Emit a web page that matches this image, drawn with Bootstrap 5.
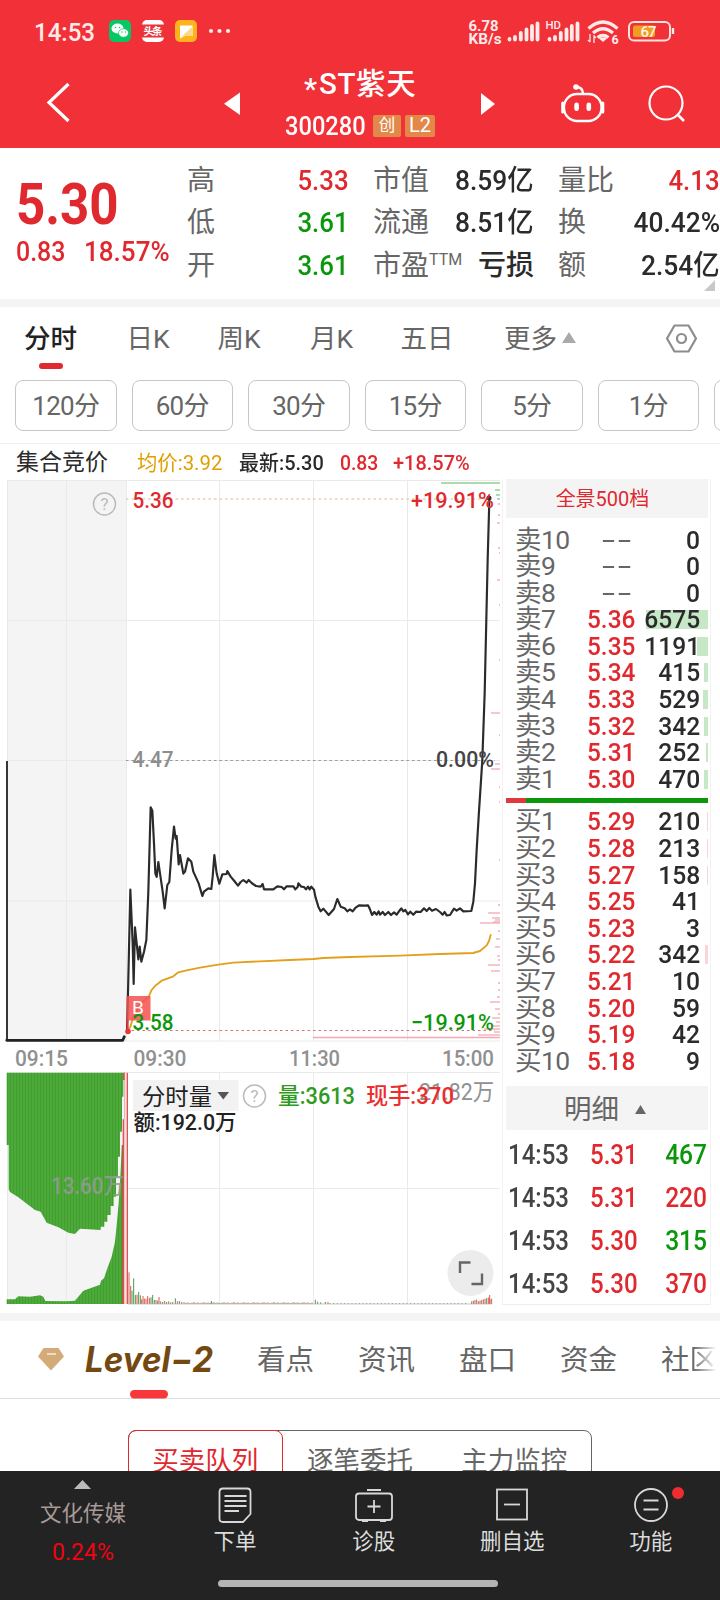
<!DOCTYPE html>
<html lang="zh-CN">
<head>
<meta charset="utf-8">
<meta name="viewport" content="width=device-width, initial-scale=1">
<title>*ST紫天 300280</title>
<link rel="stylesheet" href="https://cdn.jsdelivr.net/npm/bootstrap@5.3.0/dist/css/bootstrap.min.css">
<style>
:root{--up:#e0292f;--dn:#0b970b;--ink:#2b2b2b;--dim:#666}
body{font-family:Roboto,"Noto Sans CJK SC",sans-serif;color:var(--ink);background:#fff;width:720px;height:1600px;overflow:hidden}
svg{display:block;flex:none}
svg text{font-family:Roboto,"Noto Sans CJK SC",sans-serif}
.up{color:var(--up)}.dn{color:var(--dn)}.dim{color:var(--dim)}
.top-area{background:#f13037;height:148px;color:#fff}
.status-row{height:62px;padding-left:33px}
.title-row{height:86px}
.title-box{width:150px;padding-top:5px}
.stock-name{font-size:29.5px;line-height:34px;font-weight:500;padding-left:19px;letter-spacing:.6px}
.name-star{width:15px;height:24px;padding-top:5px}
.stock-code{font-size:26px;line-height:30px;font-weight:500;width:80px}
.tag-box{background:#e2894a;border-radius:2px;height:22px;line-height:21px;font-size:20px;text-align:center}
/* narrow numerals */
.nr,.nl{display:inline-block;font-weight:500;transform:scaleX(.89);white-space:nowrap}
.nr{transform-origin:right}.nl{transform-origin:left}
.nw{transform:scaleX(.94)}
.quote{height:151px;padding:12px 0 0 16px}
.last-price{font-size:58px;line-height:60px;font-weight:700;transform:scaleX(.88)}
.chg{font-size:28px;line-height:30px;margin-top:3px}
.q-col{font-size:28px;line-height:42.3px}
.q-row{height:42.3px}
.band{background:#f4f4f4;height:8px}
.k-tabs{height:73px;font-size:26.5px;line-height:63px}
.pill-row{height:51px;padding-left:15px;gap:15px;overflow:hidden}
.pill{width:101.5px;height:51px;border:1px solid #c6c6c6;border-radius:8px;font-size:26px;line-height:51px;letter-spacing:-.7px;flex:none;text-align:center;color:var(--dim)}
.info-row{height:36px;margin-top:12px;border-top:1px solid #f0f0f0;font-size:21px;line-height:38px;white-space:nowrap}
.side{width:209px;margin-left:2px;border-left:1px solid #f2f2f2;border-right:1px solid #f2f2f2;border-bottom:1px solid #eee;height:826px}
.side-in{margin:0 2px 0 3px}
.side-head{background:#f4f4f4;text-align:center}
.book-row{height:26.6px;line-height:26.6px;font-size:26.5px;position:relative;padding:0 8px 0 9px}
.book-row .lab{width:72px;flex:none;letter-spacing:-.6px;color:var(--dim);white-space:nowrap}
.book-row .prc{width:53px;flex:none}
.book-row .prc .nl{transform:scaleX(.92)}
.book-row .dash{padding-left:17px}
.depth{position:absolute;right:0;top:4px;height:19px}
.tick-row{height:43px;line-height:43.5px;font-size:27px;padding:0 1px 0 2px}
.l2-tabs{height:78px;border-bottom:1px solid #dcdcdc;font-size:28.5px;color:var(--dim);line-height:80px;position:relative}
.fade-end{background:linear-gradient(90deg,#666 10%,#fff 95%);-webkit-background-clip:text;background-clip:text;color:transparent}
.seg-wrap{height:72px;overflow:hidden;padding-top:31px}
.seg-box{width:464px;height:64px;margin-left:128px;border:1px solid #666;border-radius:8px;font-size:26.5px;line-height:60px;color:var(--dim);position:relative}
.seg-on{width:155px;height:64px;margin:-1px 0 0 -1px;border:1px solid var(--up);border-radius:8px;color:var(--up)}
.foot{height:129px;background:#232323;color:#dcdcdc;font-size:21.5px;position:relative}
.foot-item{width:138.7px;line-height:33px}
.home-bar{position:absolute;left:218px;top:109px;width:280px;height:7px;border-radius:4px;background:#b4b4b4}
</style>
</head>
<body>
<header class="top-area">
  <div class="status-row d-flex align-items-center">
    <svg width="687" height="62" viewBox="33 0 687 62">
      <text x="34" y="41" font-size="26.5" fill="#ffeaea" font-weight="500" textLength="61" lengthAdjust="spacingAndGlyphs">14:53</text>
      <rect x="109" y="20" width="22" height="22" rx="5" fill="#07c664"/>
      <ellipse cx="117.500" cy="28.500" rx="6" ry="5" fill="#fff"/><ellipse cx="123.500" cy="33" rx="5" ry="4.200" fill="#fff" stroke="#07c664" stroke-width=".7"/>
      <g fill="#07c664"><circle cx="115.500" cy="27.500" r=".8"/><circle cx="119.500" cy="27.500" r=".8"/><circle cx="122" cy="32" r=".7"/><circle cx="125.500" cy="32" r=".7"/></g>
      <rect x="142" y="20" width="22" height="22" rx="5" fill="#fff"/><rect x="141.500" y="24.500" width="23" height="13" fill="#e93438"/>
      <text x="143.500" y="35" font-size="10.500" font-weight="700" fill="#fff" textLength="19">头条</text>
      <rect x="175" y="20" width="22" height="22" rx="5" fill="#fdb41c"/>
      <path d="M180 25.500H192.500V36H185L180 38.500Z" fill="#fff"/><path d="M181 37L192 27V36H185Z" fill="#fbd98b"/>
      <g fill="#ffeaea"><circle cx="211" cy="31" r="2.100"/><circle cx="219.500" cy="31" r="2.100"/><circle cx="228" cy="31" r="2.100"/></g>
      <g fill="#ffeaea" font-weight="700" font-size="14.500">
        <text x="468.500" y="31" textLength="30" lengthAdjust="spacingAndGlyphs">6.78</text><text x="468.500" y="44" textLength="33" lengthAdjust="spacingAndGlyphs">KB/s</text>
        <text x="545.500" y="29" font-size="10.500" font-weight="500" textLength="15.500" lengthAdjust="spacingAndGlyphs">HD</text>
      </g>
      <g stroke="#ffeaea" stroke-width="3.800" stroke-linecap="round">
        <path d="M509.500 39.500V39M515 39.500V37M520.800 39.500V33M526.500 39.500V29.500M532 39.500V26M537.500 39.500V23.500"/>
        <path d="M549.500 39.500V39M555 39.500V37M560.800 39.500V33M566.500 39.500V29.500M571.800 39.500V26M577.500 39.500V23.500"/>
      </g>
      <g fill="none" stroke="#ffeaea" stroke-width="3.200"><path d="M588.500 28.500Q603 15.500 617.500 28.500M593 33Q603 24.500 613 33M597.500 37.500Q603 33.500 608.500 37.500"/></g>
      <path d="M599 38.500Q603 36.500 607 38.500L603 42Z" fill="#ffeaea"/>
      <path d="M590 42V34M590 42L588 40M594 35V43M594 36L596 38" stroke="#ffeaea" stroke-width="1.300" fill="none"/>
      <text x="611.500" y="43.500" font-size="12.500" font-weight="700" fill="#ffeaea">6</text>
      <rect x="629" y="22" width="41" height="18.500" rx="5" fill="none" stroke="#ffe3dc" stroke-width="2"/>
      <rect x="633" y="25.500" width="22" height="11.500" rx="2" fill="#f29d1f"/>
      <path d="M673 28V34" stroke="#ffeaea" stroke-width="2.400"/>
      <text x="640.500" y="36.500" font-size="15" font-weight="500" fill="#fff4e4" textLength="16">67</text>
    </svg>
  </div>
  <div class="title-row d-flex">
    <svg width="285" height="86" viewBox="0 62 285 86">
      <path d="M68.500 84L49 102.500L68.500 121" fill="none" stroke="#fff" stroke-width="3.200"/>
      <path d="M240 92.500V115L224 103.700Z" fill="#fff"/>
    </svg>
    <div class="title-box text-nowrap">
      <div class="stock-name d-flex"><span class="name-star">*</span>ST紫天</div>
      <div class="d-flex align-items-center" style="margin-top:10px"><div class="stock-code"><span class="nl" style="transform:scaleX(.91)">300280</span></div><div class="tag-box ms-2" style="width:28px;font-size:16.500px">创</div><div class="tag-box ms-1" style="width:30px">L2</div></div>
    </div>
    <svg width="285" height="86" viewBox="435 62 285 86">
      <path d="M481 93V115L495 104Z" fill="#fff"/>
      <g fill="none" stroke="#fff" stroke-width="2.400"><rect x="564" y="94" width="37.500" height="27" rx="13"/><path d="M562.700 103V112M602.800 103V112" stroke-width="3" stroke-linecap="round"/><path d="M583 94Q583 87 576 87"/></g>
      <circle cx="576" cy="87" r="2.800" fill="#fff"/><rect x="574.300" y="102.500" width="4.600" height="8.500" rx="2.300" fill="#fff"/><rect x="586.500" y="102.500" width="4.600" height="8.500" rx="2.300" fill="#fff"/>
      <circle cx="666" cy="103" r="16.500" fill="none" stroke="#fff" stroke-width="2.200"/><path d="M678 115L684 121" stroke="#fff" stroke-width="2.600"/>
    </svg>
  </div>
</header>

<section class="quote d-flex position-relative">
  <div style="width:171px;padding-top:14px" class="up">
    <div class="nl last-price">5.30</div>
    <div class="chg d-flex"><span class="nl" style="width:68px">0.83</span><span class="nl" style="transform:scaleX(.93)">18.57%</span></div>
  </div>
  <div class="q-col" style="width:162px">
    <div class="q-row d-flex justify-content-between"><span class="dim">高</span><span class="nr up" style="transform:scaleX(.92)">5.33</span></div>
    <div class="q-row d-flex justify-content-between"><span class="dim">低</span><span class="nr dn" style="transform:scaleX(.92)">3.61</span></div>
    <div class="q-row d-flex justify-content-between"><span class="dim">开</span><span class="nr dn" style="transform:scaleX(.92)">3.61</span></div>
  </div>
  <div class="q-col" style="width:161px;margin-left:24px">
    <div class="q-row d-flex justify-content-between"><span class="dim">市值</span><span class="nr nw">8.59亿</span></div>
    <div class="q-row d-flex justify-content-between"><span class="dim">流通</span><span class="nr nw">8.51亿</span></div>
    <div class="q-row d-flex justify-content-between"><span class="dim text-nowrap">市盈<span class="align-top" style="font-size:16px;line-height:30px">TTM</span></span><span class="fw-medium">亏损</span></div>
  </div>
  <div class="q-col" style="width:162px;margin-left:24px">
    <div class="q-row d-flex justify-content-between"><span class="dim">量比</span><span class="nr up" style="transform:scaleX(.92)">4.13</span></div>
    <div class="q-row d-flex justify-content-between"><span class="dim">换</span><span class="nr nw">40.42%</span></div>
    <div class="q-row d-flex justify-content-between"><span class="dim">额</span><span class="nr nw">2.54亿</span></div>
  </div>
  <svg class="position-absolute" style="right:5px;bottom:8px" width="11" height="11"><path d="M11 0V11H0Z" fill="#c8c8c8"/></svg>
</section>
<div class="band"></div>

<nav class="k-tabs d-flex dim text-nowrap">
  <div class="text-center position-relative fw-medium" style="width:101px;color:#222">分时<span class="position-absolute rounded-pill" style="left:38.500px;top:56px;width:24px;height:6px;background:#e0292f"></span></div>
  <div class="text-center" style="width:94px">日K</div>
  <div class="text-center" style="width:88px">周K</div>
  <div class="text-center" style="width:97px">月K</div>
  <div class="text-center" style="width:94px">五日</div>
  <div style="padding-left:30px;width:87px">更多</div>
  <svg width="159" height="62"><path d="M8 25L15 36H1Z" fill="#aaa"/><g fill="none" stroke="#8c8c8c" stroke-width="2.200"><path d="M113.500 18.500H127.500L135 31.500L127.500 44.500H113.500L106 31.500Z" stroke-linejoin="round"/><circle cx="120.500" cy="31.500" r="4.500"/></g></svg>
</nav>
<div class="pill-row d-flex">
  <div class="pill">120分</div><div class="pill">60分</div><div class="pill">30分</div><div class="pill">15分</div><div class="pill">5分</div><div class="pill">1分</div><div class="pill"></div>
</div>
<div class="info-row d-flex">
  <span style="width:137px;padding-left:16px;font-size:23px">集合竞价</span>
  <span style="width:102px;color:#dfa000"><span class="nl" style="transform:scaleX(.97);font-weight:400">均价:3.92</span></span>
  <span style="width:101px"><span class="nl" style="transform:scaleX(.95)">最新:5.30</span></span>
  <span class="up" style="width:53px"><span class="nl" style="transform:scaleX(.92)">0.83</span></span>
  <span class="up"><span class="nl" style="transform:scaleX(.95)">+18.57%</span></span>
</div>

<main class="d-flex" style="height:834px">
  <svg id="chart" width="500" height="826" viewBox="0 479 500 826">
    <defs><pattern id="stripe" width="9" height="10" patternUnits="userSpaceOnUse" x="20"><rect width="9" height="10" fill="#57b043"/><rect width="4.500" height="10" fill="#3b9c2b"/></pattern></defs>
    <rect x="7" y="480" width="119" height="561" fill="#f4f4f4"/>
    <rect x="7" y="1072" width="119" height="232" fill="#f4f4f4"/>
    <path d="M7.500 480V1041M66.500 480V1041M126.500 480V1041M219.500 480V1041M313.500 480V1041M407.500 480V1041M7 480.500H502M7 620.500H502M7 760.500H502M7 901H502M7 1041H502M7.500 1072V1304M66.500 1072V1304M219.500 1072V1304M313.500 1072V1304M407.500 1072V1304M7 1072.500H502M126 1188.500H502" stroke="#eaeaea" fill="none"/>
    <g stroke-dasharray="2.500 3"><path d="M126 499H495" stroke="#dcb896"/><path d="M126 760.500H495" stroke="#999"/><path d="M126 1030.500H495" stroke="#e07070"/></g>
    <g id="profile" stroke-width="1.300"></g>
    <path d="M7 761V1041" stroke="#222" stroke-width="1.800"/>
    <g transform="translate(0 760) scale(.33333)" fill="none" stroke-linejoin="round" stroke-linecap="round">
      <path d="M20 841H368L373 830" stroke="#222" stroke-width="8"/>
      <path d="M383 815L391 800L397 780L405 762L420 735L432 722L446 710L455 690L466 677L485 662L520 649L535 637L560 631L600 623L655 614L700 608L780 604L870 600L940 597L970 594L1050 591L1200 587L1320 582L1420 579L1440 573L1460 556L1467 543L1472 525" stroke="#e3a01c" stroke-width="5.500"/>
      <path d="M381 815L384 700L391 389L398 550L401 672L405 502L410 550L415 598L419 560L424 605L432 575L439 540L445 395L449 250L452 142L457 152L462 250L466 340L470 351L475 306L480 340L488 395L494 445L502 375L508 366L515 270L522 200L527 236L530 228L536 313L540 285L550 341L555 335L564 295L574 305L580 335L596 370L607 408L612 395L625 385L634 387L638 350L643 285L650 340L658 371L667 343L680 342L682 333L692 350L703 363L714 377L722 366L730 360L740 368L746 360L755 369L768 378L782 380L788 372L792 388L820 388L832 379L845 381L852 388L860 379L880 379L886 388L893 381L895 370L904 380L912 381L918 388L924 380L929 388L934 380L942 389L946 410L955 440L962 454L970 446L986 465L1002 447L1012 417L1022 440L1034 445L1042 454L1050 448L1058 454L1066 444L1077 436L1095 437L1104 436L1110 448L1116 465L1123 456L1130 464L1136 454L1140 464L1148 456L1155 465L1165 456L1173 465L1182 457L1190 464L1200 450L1204 445L1210 454L1216 450L1224 463L1231 455L1240 464L1248 455L1262 456L1272 445L1280 453L1288 444L1296 452L1308 447L1320 456L1328 464L1334 456L1340 466L1350 465L1362 446L1370 452L1380 445L1390 454L1414 453L1420 425L1425 370L1430 270L1436 170L1447 0L1454 -200L1463 -600L1468 -780" stroke="#2b2b2b" stroke-width="6.500"/>
    </g>
    <rect x="126.500" y="996" width="24" height="24.500" fill="#f4514f" fill-opacity=".85"/><circle cx="128" cy="1031.500" r="2.800" fill="#e8353a"/><path d="M127.500 1020V1031" stroke="#e8353a" stroke-width="2"/>
    <text x="132" y="1014" font-size="19" fill="#fff">B</text>
    <circle cx="489" cy="498" r="2.500" fill="#333"/>
    <g font-size="22.500" font-weight="500">
      <text x="132.500" y="508" fill="#e0292f" textLength="41" lengthAdjust="spacingAndGlyphs">5.36</text>
      <text x="411" y="508" fill="#e0292f" textLength="83" lengthAdjust="spacingAndGlyphs">+19.91%</text>
      <text x="132.500" y="766.500" fill="#8d8d8d" textLength="41" lengthAdjust="spacingAndGlyphs">4.47</text>
      <text x="436" y="766.500" fill="#444" textLength="58" lengthAdjust="spacingAndGlyphs">0.00%</text>
      <text x="132.500" y="1029.500" fill="#0b970b" textLength="41" lengthAdjust="spacingAndGlyphs">3.58</text>
      <text x="411" y="1029.500" fill="#0b970b" textLength="83" lengthAdjust="spacingAndGlyphs">−19.91%</text>
      <g fill="#909090">
      <text x="15" y="1066" textLength="53" lengthAdjust="spacingAndGlyphs">09:15</text><text x="133.500" y="1066" textLength="53" lengthAdjust="spacingAndGlyphs">09:30</text><text x="289" y="1066" textLength="51" lengthAdjust="spacingAndGlyphs">11:30</text><text x="442" y="1066" textLength="52" lengthAdjust="spacingAndGlyphs">15:00</text></g>
    </g>
    <g fill="none" stroke="#bbb" stroke-width="1.500"><circle cx="104.500" cy="504" r="11"/><circle cx="254.500" cy="1096" r="11"/></g>
    <g fill="#bbb" font-size="17" text-anchor="middle"><text x="104.500" y="510">?</text><text x="254.500" y="1102">?</text></g>
    <g transform="translate(0 1060) scale(.33333)">
      <path d="M20 38H374V60H370V110H366V215H360V290H354V350H348V410H341V438H332V465H322V485H313V500H302V510L240 506L225 522L205 518L175 502L140 488L122 455L105 450L55 412L30 396L26 388V255H20Z" fill="url(#stripe)"/>
      <path d="M20 732V718H45L55 709L90 710L120 706L130 710L136 723L200 724L225 722L250 692L300 674L303 662L312 655L322 625L335 590L345 545L350 495L356 430L362 330L366 250V732Z" fill="url(#stripe)"/>
      <path d="M371 732V178M375 178V38" stroke="#dc5555" stroke-width="6" fill="none"/><path d="M367.500 732V255" stroke="#a86040" stroke-width="4"/>
      <rect x="373" y="38" width="9" height="694" fill="#fbe0e0"/><path d="M382 38V732M372 38V60" stroke="#d84444" stroke-width="3.500"/>
      <g id="vol"></g>
      <path d="M384 732H1475" stroke="#aaa" stroke-width="2"/>
    </g>
    <rect x="133" y="1080" width="105.500" height="31" fill="#f2f2f2"/>
    <path d="M217.500 1092H229L223.300 1099.500Z" fill="#555"/>
    <g font-size="23">
      <text x="142" y="1104.500" fill="#222" textLength="70" lengthAdjust="spacingAndGlyphs">分时量</text>
      <text x="133.500" y="1129.500" fill="#222" font-weight="500" font-size="22" textLength="103" lengthAdjust="spacingAndGlyphs">额:192.0万</text>
      <text x="51" y="1194" fill="#999" fill-opacity=".85" font-weight="500" textLength="73" lengthAdjust="spacingAndGlyphs">13.60万</text>
      <text x="419" y="1100" fill="#909090" textLength="75" lengthAdjust="spacingAndGlyphs">21.82万</text>
      <text x="278" y="1104" fill="#2f9a22" font-weight="500" textLength="77" lengthAdjust="spacingAndGlyphs">量:3613</text>
      <text x="366" y="1104" fill="#ec2d2d" font-weight="500" textLength="88" lengthAdjust="spacingAndGlyphs">现手:370</text>
    </g>
    <circle cx="470.500" cy="1273" r="23" fill="#ececec"/><path d="M460 1273V1262.500H470.500M482 1273.500V1284H471.500" fill="none" stroke="#666" stroke-width="2.400"/>
  </svg>

  <aside class="side"><div class="side-in">
    <div class="side-head up" style="height:39px;line-height:41px;font-size:20px;padding-right:9px">全景500档</div>
    <div id="sells" style="padding-top:8.500px"></div>
    <div class="d-flex" style="height:5px;margin-top:5.500px;background:#0b970b"><div style="width:20px;background:#e0393d"></div></div>
    <div id="buys" style="padding-top:5.500px"></div>
    <div class="side-head dim d-flex justify-content-center align-items-center" style="height:44px;margin-top:12px;font-size:27.500px;gap:16px;padding:2px 4px 0 0">明细<svg width="11" height="9"><path d="M5.500 0L11 9H0Z" fill="#666"/></svg></div>
    <div id="ticks" style="padding-top:4px"></div>
  </div></aside>
</main>
<div class="band"></div>

<nav class="l2-tabs text-nowrap d-flex">
  <svg width="257" height="78" viewBox="0 1321 257 78">
    <path d="M43.500 1348H58.500L64 1356.500L51 1370.500L38 1356.500Z" fill="#d3ab78"/><path d="M47 1354H56" stroke="#f6e8d2" stroke-width="1.600"/>
    <text x="85" y="1372" font-size="35" font-weight="700" font-style="italic" fill="#744811" textLength="128" lengthAdjust="spacingAndGlyphs" style="font-family:Inter,sans-serif">Level−2</text>
    <rect x="130" y="1390" width="38" height="8.500" rx="4.200" fill="#f7373a"/>
  </svg>
  <span style="width:101px">看点</span><span style="width:101px">资讯</span><span style="width:101px">盘口</span><span style="width:101px">资金</span><span>社<span class="fade-end">区</span></span>
</nav>
<div class="seg-wrap"><div class="seg-box d-flex text-center"><div class="seg-on">买卖队列</div><div style="width:155px">逐笔委托</div><div style="width:154px">主力监控</div></div></div>

<footer class="foot d-flex text-center">
  <div style="width:166px;line-height:30px;color:#a89a98"><svg class="mx-auto" width="17" height="9" style="margin-top:9px"><path d="M8.500 0L17 9H0Z" fill="#bbb"/></svg><div style="margin-top:10px">文化传媒</div><div style="font-size:23px;margin-top:9px;color:#f00410">0.24%</div></div>
  <div class="foot-item"><svg class="mx-auto" width="40" height="54" viewBox="0 0 40 54" fill="none" stroke="#d8d8d8" stroke-width="1.800"><path d="M8 17.500H32Q35.500 17.500 35.500 21V43L28 51H8Q4.500 51 4.500 47.500V21Q4.500 17.500 8 17.500ZM9.500 25H31.500M9.500 30H31.500M9.500 35H31.500M9.500 40H24"/></svg><div>下单</div></div>
  <div class="foot-item"><svg class="mx-auto" width="40" height="54" viewBox="0 0 40 54" fill="none" stroke="#d8d8d8" stroke-width="1.800"><rect x="2" y="22.500" width="36" height="26.500" rx="3"/><path d="M13 19H27M20 29V42M13.500 35.500H26.500M8 50H14M26 50H32"/></svg><div>诊股</div></div>
  <div class="foot-item"><svg class="mx-auto" width="40" height="54" viewBox="0 0 40 54" fill="none" stroke="#d8d8d8" stroke-width="1.800"><rect x="5" y="18.500" width="30" height="30"/><path d="M12 33.500H28"/></svg><div>删自选</div></div>
  <div class="foot-item"><svg class="mx-auto overflow-visible" width="40" height="54" viewBox="0 0 40 54" fill="none" stroke="#d8d8d8" stroke-width="1.800"><circle cx="20" cy="34" r="16"/><path d="M12.500 29.500H27.500M12.500 38.500H27.500"/><circle cx="47" cy="22" r="6" fill="#ee2e2e" stroke="none"/></svg><div>功能</div></div>
  <div class="home-bar"></div>
</footer>

<script>
const sells=[['10','--',0,0],['9','--',0,0],['8','--',0,0],['7','5.36',6575,62],['6','5.35',1191,11],['5','5.34',415,4],['4','5.33',529,5],['3','5.32',342,4],['2','5.31',252,2],['1','5.30',470,4]];
const buys=[['1','5.29',210,1],['2','5.28',213,1],['3','5.27',158,1],['4','5.25',41,0],['5','5.23',3,0],['6','5.22',342,3],['7','5.21',10,0],['8','5.20',59,0],['9','5.19',42,0],['10','5.18',9,0]];
const price=p=>p==='--'?'<span class="nl dim dash"><svg width="31" height="26"><path d="M0 14H12.500M17.500 14H30" stroke="#666" stroke-width="2"/></svg></span>':`<span class="nl up">${p}</span>`;
const row=(name,color)=>([n,p,v,w])=>`<div class="book-row d-flex"><span class="depth" style="width:${w}px;background:${color}"></span><span class="lab">${name}${n}</span><span class="prc">${price(p)}</span><span class="nr ms-auto position-relative" style="transform:scaleX(.93)">${v}</span></div>`;
document.getElementById('sells').innerHTML=sells.map(row('卖','#c7e8c7')).join('');
document.getElementById('buys').innerHTML=buys.map(row('买','#fad4d6')).join('');
document.getElementById('ticks').innerHTML=[['5.31',467,'dn'],['5.31',220,'up'],['5.30',315,'dn'],['5.30',370,'up']].map(([p,v,c])=>`<div class="tick-row d-flex"><span class="nl" style="width:82px;color:#444">14:53</span><span class="nl up">${p}</span><span class="nr ms-auto ${c}" style="transform:scaleX(.91)">${v}</span></div>`).join('');

/* volume-by-price marks at the right edge: [y, length] */
const up=[[504,2],[515,2],[523,3],[548,2],[553,1],[580,3],[605,1],[660,1],[713,9],[735,1],[764,5],[769,9],[787,1],[802,1],[860,1],[905,2],[913,12],[918,8],[920,5],[922,7],[923,20],[931,2],[939,4],[947,5],[956,3],[960,2],[965,12],[971,9],[983,2],[990,2],[997,3],[1002,10],[1009,5],[1014,2],[1018,8],[1022,4],[1026,9],[1029,16],[1032,6],[1035,22],[1037.5,187]];
document.getElementById('profile').innerHTML='<path stroke="#8fd196" stroke-width="1.500" d="M441 483H500M495 490H500M496 495H500M497 499H500"/>'+up.map(([y,l])=>`<path stroke="#f3a9b4" d="M${500-l} ${y}H500"/>`).join('');

/* minute volume bars: [x, height, 1 = up] */
let vol=[[387,95,1],[392,54,1],[396,40,0],[401,77,0],[406,27,0],[411,28,1],[416,36,0],[421,26,0],[425,14,1],[429,24,1],[433,16,1],[438,16,1],[443,24,1],[448,18,1],[453,20,0],[458,27,0],[463,12,0],[468,12,1],[473,10,0],[477,21,1],[482,8,1],[488,6,0],[494,9,1],[500,6,0],[506,8,0],[512,5,1],[518,6,1],[526,17,0],[532,8,1],[538,9,0],[545,6,0]];
for(let x=552;x<940;x+=6)vol.push([x,3+(x*7%5)*.6,x%4==0?1:0]);
vol.push([634,9,0],[946,13,0],[953,7,0],[962,5,0],[976,6,0],[984,6,1]);
for(let x=990;x<1400;x+=11)vol.push([x,2.5,x%3==0?1:0]);
for(let x=1415;x<1476;x+=5)vol.push([x,5+(x-1415)/6+(x*3%7),x%4?1:0]);
vol.push([1469,27,1]);
document.getElementById('vol').innerHTML=vol.map(([x,h,u])=>`<rect x="${x-1.5}" y="${732-h}" width="3" height="${h}" fill="${u?'#e0584f':'#4b9a50'}"/>`).join('');
</script>
<script src="https://cdn.jsdelivr.net/npm/bootstrap@5.3.0/dist/js/bootstrap.bundle.min.js"></script>
</body>
</html>
